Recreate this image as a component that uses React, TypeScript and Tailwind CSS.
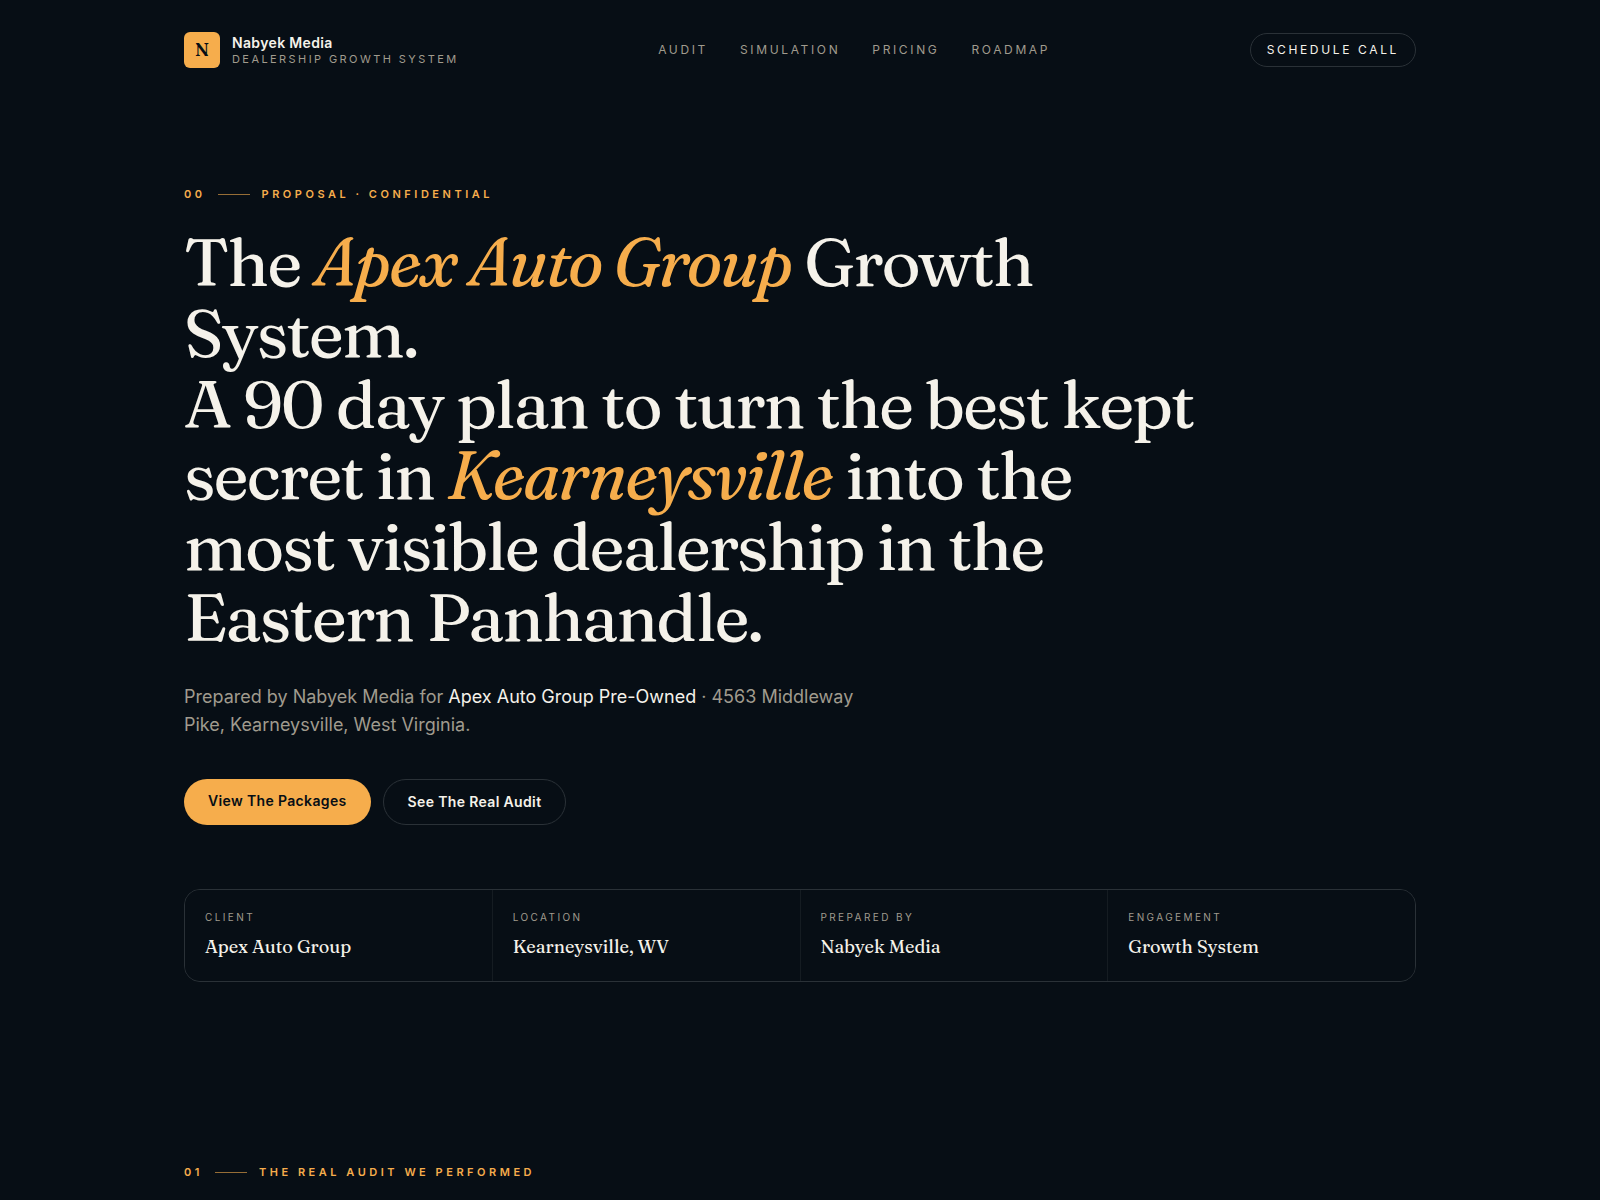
const NAV_LINKS = [
  { label: 'Audit', href: '#audit' },
  { label: 'Simulation', href: '#simulation' },
  { label: 'Pricing', href: '#pricing' },
  { label: 'Roadmap', href: '#roadmap' },
]

const DETAILS = [
  { label: 'Client', value: 'Apex Auto Group' },
  { label: 'Location', value: 'Kearneysville, WV' },
  { label: 'Prepared by', value: 'Nabyek Media' },
  { label: 'Engagement', value: 'Growth System' },
]

interface EyebrowProps {
  number: string
  children: string
}

function Eyebrow({ number, children }: EyebrowProps) {
  return (
    <div className="flex items-center gap-3 text-[11px] leading-4 font-semibold uppercase tracking-[0.32em] text-[#f6ad4c]">
      <span>{number}</span>
      <span className="h-px w-8 bg-[#f6ad4c]/60" />
      <span>{children}</span>
    </div>
  )
}

function Header() {
  return (
    <header className="mx-auto flex max-w-7xl items-center justify-between px-6 py-8">
      <a href="#top" className="flex items-center gap-3">
        <span className="flex size-9 items-center justify-center rounded-md bg-[#f6ad4c] font-['Fraunces','Liberation_Serif',serif] text-lg font-semibold text-[#070e15]">
          N
        </span>
        <span className="flex flex-col">
          <span className="text-sm leading-[18px] font-semibold tracking-wide">Nabyek Media</span>
          <span className="text-[11px] leading-[14px] uppercase tracking-[0.22em] text-[#a09b8e]">
            Dealership Growth System
          </span>
        </span>
      </a>
      <nav className="flex items-center gap-8 text-xs uppercase tracking-[0.22em] text-[#a09b8e]">
        {NAV_LINKS.map((link) => (
          <a key={link.href} href={link.href}>
            {link.label}
          </a>
        ))}
      </nav>
      <a
        href="#call"
        className="rounded-full border border-[#2a3137] px-4 py-2 text-xs uppercase tracking-[0.22em]"
      >
        Schedule Call
      </a>
    </header>
  )
}

export default function App() {
  return (
    <div
      id="top"
      className="min-h-screen bg-[#070e15] font-['Inter',sans-serif] text-[#f5f2ea]"
    >
      <Header />

      <main>
        {/* Hero */}
        <section className="mx-auto max-w-7xl px-6 pt-[86px] pb-[86px]">
          <Eyebrow number="00">Proposal · Confidential</Eyebrow>

          <h1 className="mt-6 max-w-5xl font-['Fraunces','Liberation_Serif',serif] text-[67px] leading-[71px] font-medium tracking-[-0.03em]">
            The <em className="text-[#f6ad4c]">Apex Auto Group</em> Growth System.
            <br />
            A 90 day plan to turn the best kept secret in{' '}
            <em className="text-[#f6ad4c]">Kearneysville</em> into the most visible dealership in
            the Eastern Panhandle.
          </h1>

          <p className="mt-[31px] max-w-2xl text-lg leading-7 text-[#a09b8e]">
            Prepared by Nabyek Media for{' '}
            <span className="text-[#f5f2ea]">Apex Auto Group Pre-Owned</span> · 4563 Middleway
            Pike, Kearneysville, West Virginia.
          </p>

          <div className="mt-10 flex gap-3 text-sm font-semibold tracking-wide">
            <a href="#pricing" className="rounded-full bg-[#f6ad4c] px-6 py-3 text-[#070e15]">
              View The Packages
            </a>
            <a href="#audit" className="rounded-full border border-[#2a3137] px-6 py-3">
              See The Real Audit
            </a>
          </div>

          <dl className="mt-16 grid grid-cols-4 gap-px overflow-hidden rounded-2xl border border-[#2a3137] bg-[#151c22]">
            {DETAILS.map((item) => (
              <div key={item.label} className="bg-[#070e15] p-5">
                <dt className="text-[10px] leading-[15px] uppercase tracking-[0.24em] text-[#a09b8e]">
                  {item.label}
                </dt>
                <dd className="mt-2 font-['Fraunces','Liberation_Serif',serif] text-lg leading-7 font-medium">
                  {item.value}
                </dd>
              </div>
            ))}
          </dl>
        </section>

        {/* Audit */}
        <section id="audit" className="mx-auto max-w-7xl px-6 pt-24">
          <Eyebrow number="01">The Real Audit We Performed</Eyebrow>
        </section>
      </main>
    </div>
  )
}
